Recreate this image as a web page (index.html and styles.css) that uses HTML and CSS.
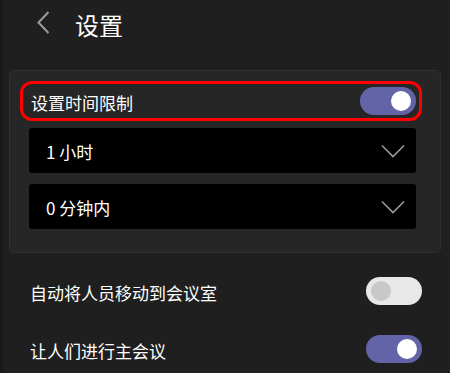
FILE: index.html
```html
<!DOCTYPE html>
<html lang="zh-CN">
<head>
<meta charset="utf-8">
<link rel="stylesheet" href="styles.css">
</head>
<body>
<div class="page">
  <header class="header">
    <svg class="back" width="13" height="23" viewBox="0 0 13 23"><polyline points="11.5,1 1.5,11.5 11.5,22" fill="none" stroke="#9c9c9c" stroke-width="2"/></svg>
    <h1 class="title">设置</h1>
  </header>

  <section class="card">
    <div class="row-highlight">
      <span class="label">设置时间限制</span>
      <span class="toggle on"><span class="knob"></span></span>
    </div>
    <div class="select">
      <span class="select-text">1 小时</span>
      <svg class="chev" width="24" height="14" viewBox="0 0 24 14"><polyline points="1,1.5 12,12.5 23,1.5" fill="none" stroke="#9a9a9a" stroke-width="1.6"/></svg>
    </div>
    <div class="select">
      <span class="select-text">0 分钟内</span>
      <svg class="chev" width="24" height="14" viewBox="0 0 24 14"><polyline points="1,1.5 12,12.5 23,1.5" fill="none" stroke="#9a9a9a" stroke-width="1.6"/></svg>
    </div>
  </section>

  <div class="row first">
    <span class="label">自动将人员移动到会议室</span>
    <span class="toggle off"><span class="knob"></span></span>
  </div>
  <div class="row">
    <span class="label">让人们进行主会议</span>
    <span class="toggle on"><span class="knob"></span></span>
  </div>
</div>
</body>
</html>
```

FILE: styles.css
```css
html, body {
  margin: 0;
  padding: 0;
  background: #1f1f1f;
  width: 450px;
  height: 373px;
  overflow: hidden;
}
body {
  font-family: "Noto Sans CJK SC", "Noto Sans", sans-serif;
  color: #ffffff;
}
.page {
  border-left: 3px solid #1a1a1a;
  height: 373px;
  box-sizing: border-box;
}
.header {
  display: flex;
  align-items: center;
  height: 50px;
  padding-left: 34px;
}
.back {
  margin-top: -6px;
  margin-right: 25px;
}
.title {
  margin: 0;
  font-size: 24px;
  font-weight: 400;
  line-height: 1;
  color: #ffffff;
}
.card {
  margin: 20px 0 0 6px;
  width: 432px;
  box-sizing: border-box;
  background: #262626;
  border: 1px solid #303030;
  border-radius: 5px;
  padding: 10px 24px 23px 19px;
  display: flex;
  flex-direction: column;
}
.row-highlight {
  display: flex;
  align-items: center;
  justify-content: space-between;
  height: 40px;
  box-sizing: border-box;
  border: 3px solid #ff0000;
  border-radius: 12px;
  margin: 0 -6px 7px -9px;
  padding: 0 3px 0 8px;
}
.label {
  font-size: 17px;
  line-height: 1;
  color: #ffffff;
}
.row-highlight .label {
  margin-top: 2px;
}
.toggle {
  position: relative;
  width: 56px;
  height: 28px;
  border-radius: 14px;
  flex-shrink: 0;
}
.toggle.on { background: #6264a7; }
.toggle.off { background: #e8e8e8; }
.knob {
  position: absolute;
  top: 4px;
  width: 20px;
  height: 20px;
  border-radius: 50%;
}
.toggle.on .knob { right: 5px; background: #ffffff; }
.toggle.off .knob { left: 5px; background: #c8c8c8; }
.select {
  display: flex;
  align-items: center;
  justify-content: space-between;
  height: 45px;
  background: #000000;
  border-radius: 3px;
  padding: 0 11px 0 17px;
  margin-bottom: 11px;
}
.select:last-child { margin-bottom: 0; }
.select-text {
  font-size: 17px;
  line-height: 1;
  color: #ffffff;
  margin-top: 1px;
}
.chev { margin-top: 1px; }
.row {
  display: flex;
  align-items: center;
  justify-content: space-between;
  height: 58px;
  padding: 0 28px 0 27px;
}
.row.first { margin-top: 9px; }
.row .label { margin-top: 2px; }
```
